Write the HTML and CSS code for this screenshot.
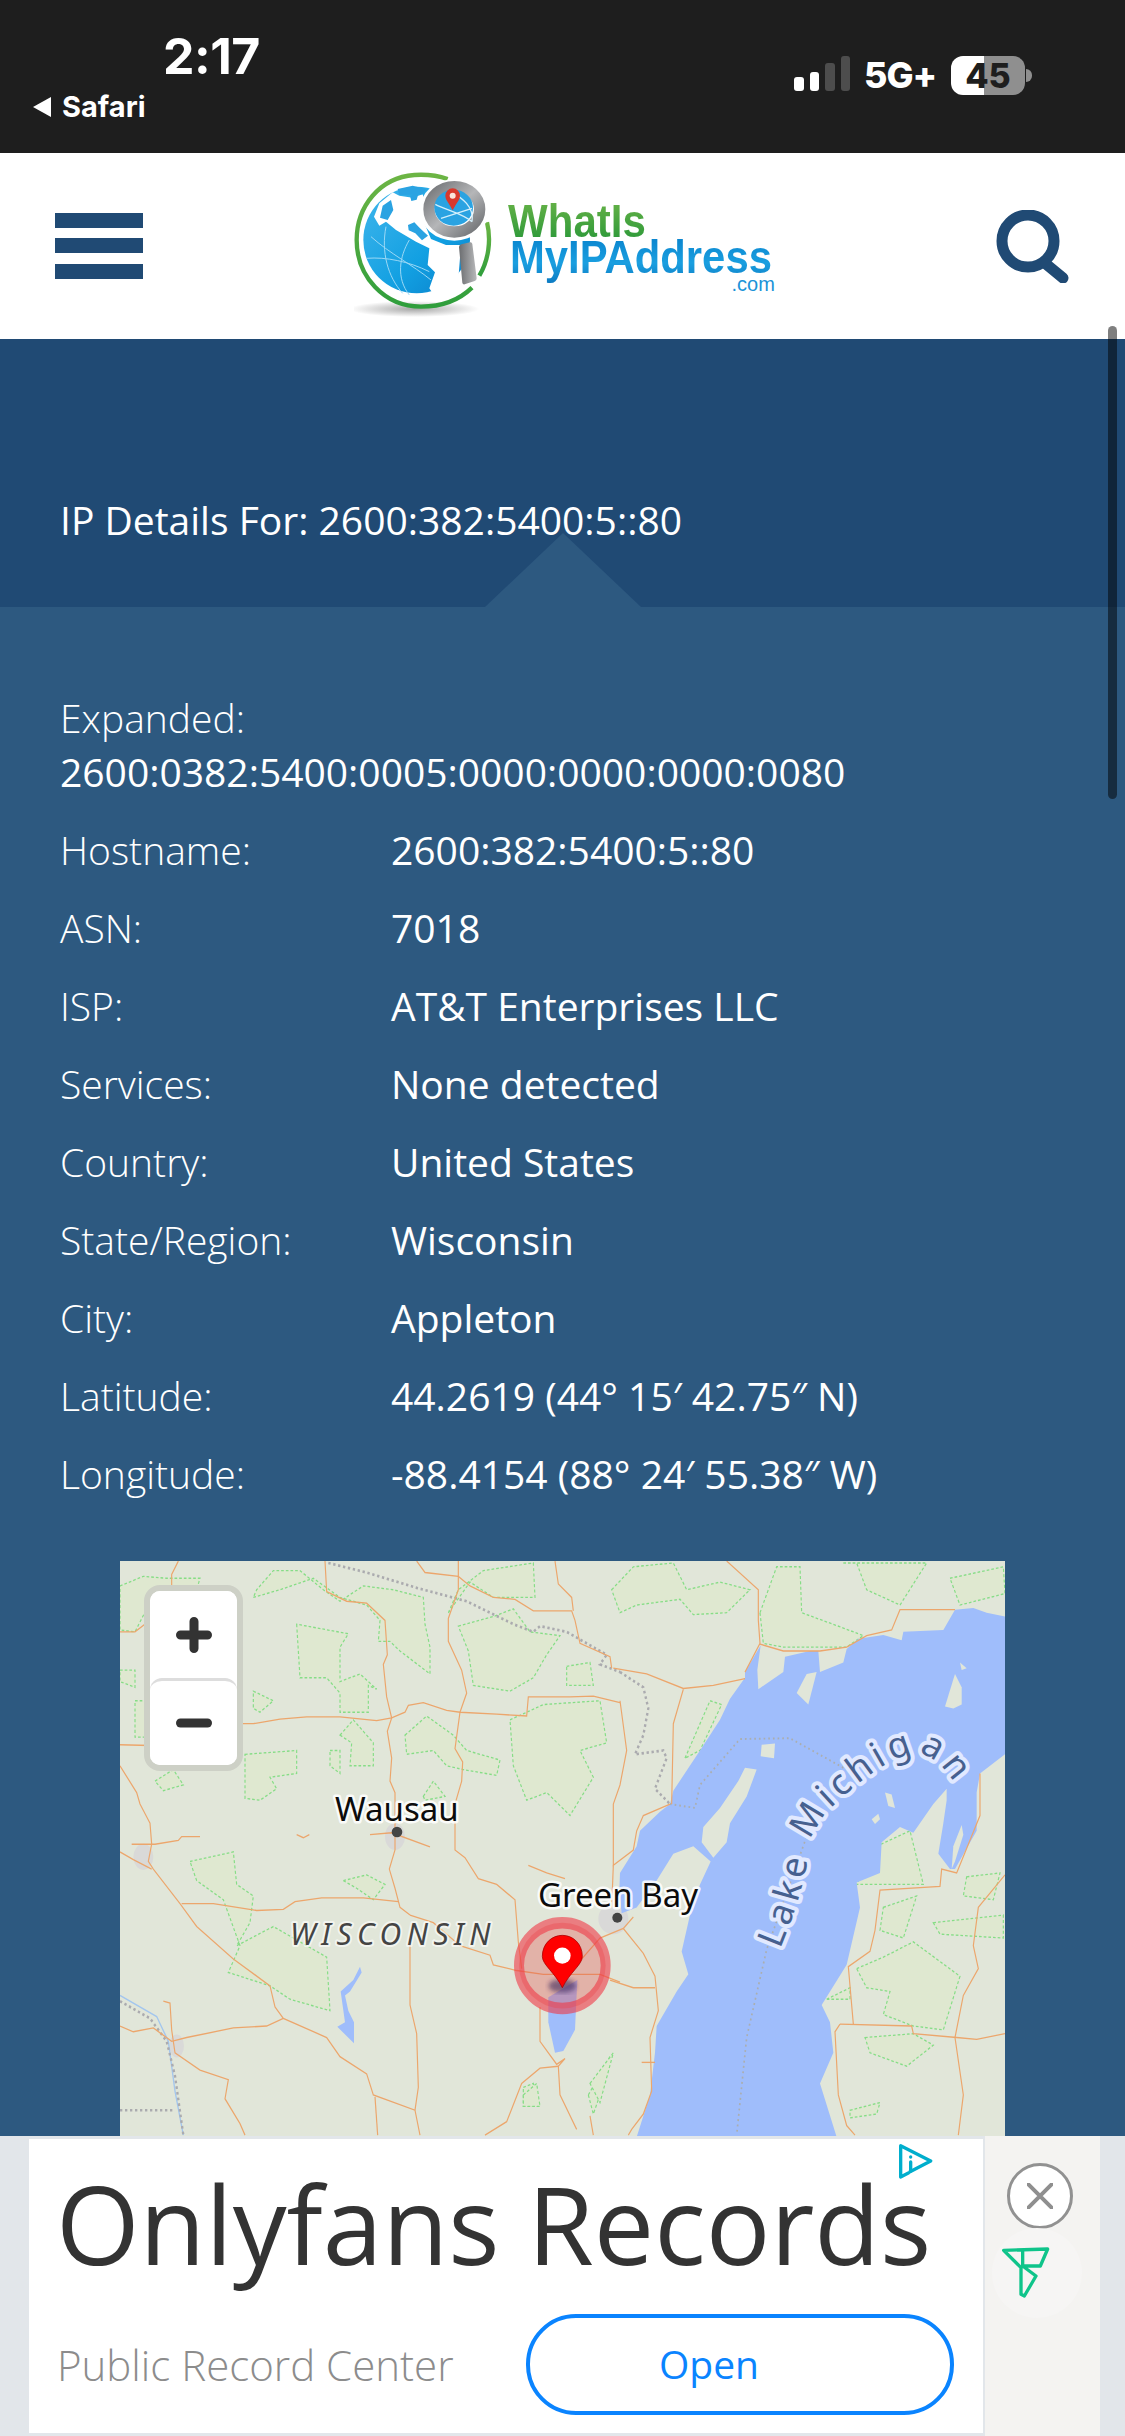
FILE: index.html
```html
<!DOCTYPE html>
<html lang="en">
<head>
<meta charset="utf-8">
<title>IP Details</title>
<link rel="stylesheet" href="styles.css">
</head>
<body>
<div class="status">
  <div class="status-left">
    <div class="time">2:17</div>
    <div class="back"><span class="back-arrow"></span><span>Safari</span></div>
  </div>
  <div class="status-right">
    <div class="signal"><i class="b1 on"></i><i class="b2 on"></i><i class="b3"></i><i class="b4"></i></div>
    <div class="net">5G+</div>
    <div class="battery">45</div>
    <div class="battery-cap"></div>
  </div>
</div>

<header class="site-header">
  <div class="burger"><i></i><i></i><i></i></div>
  <div class="logo">
    <svg class="logo-mark" viewBox="353 171 147 150" aria-label="WhatIsMyIPAddress globe">
      <defs>
        <linearGradient id="gGlobe" x1="0" y1="0" x2="1" y2="1"><stop offset="0" stop-color="#41b6ec"/><stop offset=".6" stop-color="#12a0e2"/><stop offset="1" stop-color="#0a7fc9"/></linearGradient>
        <linearGradient id="gRing" x1="0" y1="0" x2="1" y2="1"><stop offset="0" stop-color="#737578"/><stop offset=".5" stop-color="#b5b6b8"/><stop offset="1" stop-color="#6e7073"/></linearGradient>
        <linearGradient id="gHandle" x1="0" y1="0" x2="1" y2="0"><stop offset="0" stop-color="#6b6d70"/><stop offset="1" stop-color="#b8b9bb"/></linearGradient>
        <linearGradient id="gArc" x1="0" y1="0" x2="0" y2="1"><stop offset="0" stop-color="#6cb544"/><stop offset="1" stop-color="#2f9e3c"/></linearGradient>
        <radialGradient id="gShadow"><stop offset="0" stop-color="#8a8a8a" stop-opacity=".75"/><stop offset="1" stop-color="#8a8a8a" stop-opacity="0"/></radialGradient>
      </defs>
      <g transform="translate(345 165) scale(.33333)">
        <ellipse cx="205" cy="432" rx="195" ry="24" fill="url(#gShadow)"/>
        <path class="logo-ring" d="M305 42 C270 30 235 28 205 30 C100 38 32 125 32 225 C32 335 115 425 225 425 C290 425 340 405 378 368"/>
        <path class="logo-ring" d="M423 172 C436 225 428 285 400 332"/>
        <circle cx="212" cy="225" r="160" fill="url(#gGlobe)"/>
        <path class="logo-land" d="M100 115 L140 82 L160 92 L200 98 L230 88 L242 130 L235 175 L255 222 L300 240 L345 240 L338 330 L320 372 L262 388 L250 370 L267 322 L245 300 L250 250 L210 230 L150 195 L120 170 L100 182 L84 155Z"/>
        <path class="logo-sea" d="M110 122 L135 105 L142 135 L125 165 L102 158Z M192 92 L218 84 L212 104 L196 108Z M155 72 L200 62 L240 72 L230 88 L160 90Z M186 180 L205 172 L222 190 L246 212 L228 226 L208 205 L188 196Z"/>
        <path class="logo-grid" d="M75 215 C130 265 200 300 255 345 M120 185 C105 260 125 335 170 385 M190 225 C160 275 150 340 190 390 M62 280 C120 275 190 290 250 320"/>
        <ellipse cx="325" cy="135" rx="104" ry="92" fill="#fff"/>
        <ellipse cx="325" cy="133" rx="76" ry="68" fill="none" stroke="url(#gRing)" stroke-width="34"/>
        <ellipse cx="323" cy="128" rx="58" ry="54" fill="#2aa3e2"/>
        <path class="logo-grid-w" d="M268 118 C300 135 350 145 378 170 M310 76 C350 100 385 125 378 170 M285 160 L378 130"/>
        <path d="M320 136 C310 115 298 105 298 92 A22 22 0 0 1 342 92 C342 105 330 115 320 136Z" fill="#d8382c"/>
        <circle cx="320" cy="92" r="9" fill="#fbe3da"/>
        <path d="M346 238 L372 232 Q378 231 379 237 L392 340 Q392 346 386 348 L356 358 Q350 359 349 353 L339 246 Q339 240 346 238Z" fill="url(#gHandle)"/>
      </g>
    </svg>
    <div class="logo-text">
      <div class="logo-what">WhatIs</div>
      <div class="logo-my">MyIPAddress</div>
      <div class="logo-com">.com</div>
    </div>
  </div>
  <svg class="search" viewBox="0 0 73 73" aria-label="Search">
    <circle cx="32" cy="31" r="26" />
    <line x1="50" y1="54" x2="67" y2="68"/>
  </svg>
</header>

<section class="hero">
  <h1 class="hero-title">IP Details For: 2600:382:5400:5::80</h1>
</section>

<main class="details">
  <div class="expanded">
    <div class="label">Expanded:</div>
    <div class="value">2600:0382:5400:0005:0000:0000:0000:0080</div>
  </div>
  <div class="row"><div class="label">Hostname:</div><div class="value">2600:382:5400:5::80</div></div>
  <div class="row"><div class="label">ASN:</div><div class="value">7018</div></div>
  <div class="row"><div class="label">ISP:</div><div class="value">AT&amp;T Enterprises LLC</div></div>
  <div class="row"><div class="label">Services:</div><div class="value">None detected</div></div>
  <div class="row"><div class="label">Country:</div><div class="value">United States</div></div>
  <div class="row"><div class="label">State/Region:</div><div class="value">Wisconsin</div></div>
  <div class="row"><div class="label">City:</div><div class="value">Appleton</div></div>
  <div class="row"><div class="label">Latitude:</div><div class="value">44.2619 (44° 15′ 42.75″ N)</div></div>
  <div class="row"><div class="label">Longitude:</div><div class="value">-88.4154 (88° 24′ 55.38″ W)</div></div>

  <div class="map">
    <svg class="map-canvas" viewBox="0 0 885 578" aria-label="Map around Appleton, Wisconsin">
      <defs><filter id="blur6"><feGaussianBlur stdDeviation="7"/></filter></defs>
      <g transform="translate(-20 -21) scale(.33333 .3827)">
        <g class="forest">
          <path d="M60 120 L130 95 L200 100 L300 100 L290 130 L200 130 L140 180 L105 240 L60 235Z"/>
          <path d="M460 150 L540 130 L640 100 L720 150 L800 170 L840 210 L835 265 L870 265 L900 290 L990 350 L990 280 L975 220 L970 150 L880 130 L790 120 L720 160 L670 130 L600 80 L520 80 L470 130Z"/>
          <path d="M590 220 L600 360 L680 360 L720 400 L720 450 L805 450 L805 380 L830 390 L780 350 L720 370 L720 280 L745 245Z"/>
          <path d="M1045 190 L1075 130 L1150 80 L1300 60 L1305 150 L1240 150 L1180 150 L1110 110Z"/>
          <path d="M1075 225 L1180 200 L1240 180 L1290 240 L1380 250 L1340 300 L1300 360 L1230 395 L1120 380 L1105 290Z"/>
          <path d="M1230 470 L1330 430 L1500 420 L1520 530 L1440 550 L1480 620 L1410 720 L1340 660 L1280 680 L1240 590Z"/>
          <path d="M915 510 L980 460 L1060 510 L1100 550 L1200 575 L1190 615 L1090 600 L1040 590 L1000 550 L920 560Z"/>
          <path d="M435 560 L590 550 L590 610 L510 620 L530 650 L480 680 L435 675Z"/>
          <path d="M720 510 L760 470 L790 500 L820 530 L820 590 L750 590 L755 530Z"/>
          <path d="M690 550 L720 550 L720 610 L690 590Z"/>
          <path d="M270 840 L400 815 L410 900 L460 930 L450 1000 L410 1060 L520 1010 L680 1090 L690 1230 L570 1200 L510 1165 L385 1130 L420 1060 L370 940 L290 890Z"/>
          <path d="M730 890 L800 875 L855 900 L820 940 L770 910Z"/>
          <path d="M970 670 L1000 630 L1035 670 L975 680Z"/>
          <path d="M165 630 L220 600 L250 640 L190 655Z"/>
          <path d="M105 420 L150 420 L150 515 L105 515Z"/>
          <path d="M60 340 L105 340 L105 385 L60 370Z"/>
          <path d="M460 395 L520 420 L480 450 L460 440Z"/>
          <path d="M1465 1450 L1530 1350 L1520 1400 L1480 1500Z"/>
          <path d="M1270 1430 L1300 1420 L1320 1480 L1270 1480Z"/>
          <path d="M1400 330 L1470 320 L1480 380 L1400 380Z"/>
        </g>
        <g class="urban">
          <ellipse cx="130" cy="828" rx="30" ry="34"/>
          <ellipse cx="885" cy="775" rx="30" ry="35"/>
          <ellipse cx="230" cy="1322" rx="22" ry="30"/>
        </g>
        <path class="lake" d="M780 1115 L785 1130 L750 1180 L735 1190 L745 1230 L762 1260 L762 1315 L712 1272 L735 1260 L722 1180 L760 1150Z"/>
        <path class="river" d="M60 1190 L170 1245 L205 1310 L225 1440 L250 1555"/>
        <path class="border" d="M60 1205 L150 1250 L200 1310 L225 1400 L250 1555"/>
        <path class="border" d="M60 1490 L225 1490"/>
        <path class="border" d="M685 60 L800 85 L950 125 L1100 160 L1240 220 L1300 240 L1320 225 L1400 240 L1520 300 L1500 325 L1560 345"/>
        <g class="roads">
          <path d="M60 240 L105 240 L150 210 L215 130 L215 90 L235 55"/>
          <path d="M410 480 L460 480 L540 468 L620 462 L720 462 L830 472 L875 465 L915 450 L925 432 L970 425 L1040 445 L1080 450 L1190 455 L1280 460 L1285 410 L1410 410 L1480 408 L1560 425"/>
          <path d="M675 55 L680 135 L740 160 L800 165 L855 210 L862 300 L850 325 L860 410 L875 465 L862 500 L875 570 L870 630 L885 660 L885 810 L868 860 L885 910 L900 960 L930 980"/>
          <path d="M950 55 L975 85 L1075 95 L1110 120 L1180 150 L1245 155 L1300 185 L1415 185 L1425 210 L1440 270 L1530 305 L1535 335"/>
          <path d="M1075 55 L1075 130 L1045 205 L1045 265 L1085 340 L1100 400 L1080 450 L1065 545 L1088 580 L1085 630 L1065 690 L1065 810 L1095 830 L1135 885 L1190 900 L1245 940 L1255 1050 L1265 1120"/>
          <path d="M60 590 L110 660 L120 690 L150 740 L155 795 L145 840 L160 860 L240 950 L290 1010 L400 1095 L510 1165 L525 1220 L550 1250 L680 1300 L720 1350 L800 1395 L820 1450 L945 1490 L960 1555"/>
          <path d="M95 795 L165 795 L235 785 L245 775 L300 775"/>
          <path d="M60 815 L100 835 L155 860"/>
          <path d="M245 950 L340 950 L470 968 L550 965 L585 945 L665 935 L790 935 L895 945"/>
          <path d="M930 1050 L930 1215 L950 1290 L955 1430 L945 1490"/>
          <path d="M930 980 L1000 1000 L1080 1060 L1170 1085 L1180 1110 L1250 1125 L1330 1135 L1500 1135 L1560 1155"/>
          <path d="M60 1270 L100 1285 L160 1275 L215 1310 L260 1300 L400 1275 L500 1270 L550 1250"/>
          <path d="M190 1205 L210 1210 L215 1280 L225 1340 L300 1385 L385 1410 L375 1460 L420 1525 L435 1555"/>
          <path d="M1320 1220 L1320 1310 L1370 1370 L1395 1355 L1375 1375 L1380 1450 L1430 1540"/>
          <path d="M1155 1555 L1220 1520 L1265 1420 L1320 1380 L1375 1375"/>
          <path d="M810 770 L875 765 L990 802"/>
          <path d="M1285 850 L1340 870 L1395 885"/>
          <path d="M825 1455 L833 1555"/>
          <path d="M60 535 L150 537"/>
          <path d="M590 770 L610 778 L628 770"/>
          <path d="M1365 55 L1375 115 L1415 150 L1420 185"/>
        </g>
      </g>
      <g transform="translate(380 -21) scale(.33333 .3827)">
        <g class="forest">
          <path d="M335 130 L400 70 L520 60 L560 130 L660 110 L750 130 L680 190 L580 195 L540 155 L410 170 L360 190Z"/>
          <path d="M780 190 L830 70 L900 70 L905 190 L1030 230 L1090 250 L1040 280 L850 280 L790 270Z"/>
          <path d="M1030 60 L1280 60 L1200 170 L1100 130 L1070 60Z"/>
          <path d="M1350 100 L1510 70 L1515 140 L1380 170Z"/>
          <path d="M555 570 L630 420 L665 430 L600 550Z"/>
          <path d="M1070 1120 L1150 1090 L1240 1050 L1380 1140 L1330 1280 L1240 1270 L1150 1240 L1170 1180 L1100 1170Z"/>
          <path d="M1095 1300 L1240 1290 L1300 1320 L1220 1375 L1110 1340Z"/>
          <path d="M1150 960 L1250 930 L1210 1040 L1140 1020Z"/>
          <path d="M1130 800 L1230 760 L1270 900 L1070 900Z"/>
          <path d="M1300 1000 L1510 980 L1510 1040 L1320 1030Z"/>
          <path d="M1400 880 L1500 870 L1480 940 L1390 930Z"/>
          <path d="M1050 1490 L1140 1470 L1130 1500 L1050 1510Z"/>
          <path d="M980 1200 L1050 1170 L1050 1200Z"/>
          <path d="M270 1420 L340 1340 L300 1470Z"/>
          <path d="M70 1450 L110 1420 L120 1480 L70 1480Z"/>
        </g>
        <ellipse class="urban" cx="340" cy="990" rx="45" ry="40"/>
        <path class="lake" d="M1515 200 L1460 190 L1420 178 L1365 182 L1330 235 L1210 240 L1205 262 L1150 248 L1075 258 L1040 285 L1030 320 L960 345 L955 290 L930 290 L855 305 L850 345 L775 390 L772 340 L782 275 L735 345 L735 360 L690 415 L660 470 L600 550 L520 655 L510 690 L480 710 L420 760 L410 800 L360 870 L358 915 L365 975 L410 960 L470 890 L520 820 L580 800 L632 840 L600 900 L575 960 L545 1075 L565 1135 L530 1180 L470 1270 L465 1340 L450 1450 L410 1560 L1010 1560 L960 1420 L1000 1340 L990 1260 L965 1215 L1040 1110 L1080 960 L1070 895 L1140 870 L1145 790 L1200 750 L1240 765 L1300 690 L1340 650 L1340 680 L1330 740 L1315 820 L1350 860 L1365 860 L1430 760 L1430 660 L1440 610 L1515 560Z"/>
        <g class="land">
          <path d="M770 600 L735 595 L715 630 L660 700 L610 750 L605 790 L640 830 L680 790 L690 740 L740 670Z"/>
          <path d="M890 400 L920 350 L950 345 L925 430Z"/>
          <path d="M785 535 L825 532 L822 570 L782 565Z"/>
          <path d="M1155 660 L1175 665 L1185 700 L1165 695Z"/>
          <path d="M1115 730 L1135 715 L1140 730 L1125 742Z"/>
          <path d="M1380 320 L1400 335 L1385 340Z"/>
          <path d="M1335 435 L1365 350 L1385 385 L1385 430 L1360 440Z"/>
          <path d="M1355 860 L1360 800 L1385 745 L1390 770 L1365 840Z"/>
        </g>
        <path class="lake" d="M145 1195 L232 1150 L225 1280 L190 1335 L165 1340 L145 1260Z"/>
        <path class="border" d="M360 345 L430 385 L445 440 L430 510 L405 560 L490 550 L500 570 L465 650 L510 690"/>
        <path class="border-fine" d="M510 690 L585 700 L600 640 L720 520 L870 518 L1040 600"/>
        <path class="border-fine" d="M930 750 L800 1070 L740 1300 L710 1555"/>
        <g class="roads">
          <path d="M680 55 L775 130 L775 210 L780 270 L735 345"/>
          <path d="M780 272 L850 290 L960 290 L1040 280 L1100 250 L1175 235 L1200 182 L1365 182"/>
          <path d="M340 335 L440 350 L550 388 L640 380 L735 362"/>
          <path d="M550 390 L520 480 L515 690"/>
          <path d="M360 420 L380 550 L360 640 L340 690 L340 850 L400 810 L410 760 L430 720 L510 690"/>
          <path d="M340 850 L335 960"/>
          <path d="M370 1015 L430 1080 L465 1140 L475 1230 L450 1300 L455 1440 L430 1500 L395 1540 L385 1555"/>
          <path d="M330 1150 L400 1170 L465 1170"/>
          <path d="M270 1505 L280 1555"/>
          <path d="M425 1365 L465 1365"/>
          <path d="M1440 610 L1440 720 L1370 870 L1325 860 L1320 905 L1140 915 L1125 1020 L1110 1075 L1045 1115 L1060 1265"/>
          <path d="M1020 1265 L1235 1270 L1240 1290 L1370 1300 L1430 1305 L1515 1290"/>
          <path d="M1020 1265 L1005 1285 L1015 1450 L1040 1530 L1065 1555"/>
          <path d="M1515 875 L1435 960 L1420 1060 L1435 1120 L1390 1190 L1365 1300 L1390 1450 L1375 1555"/>
          <path d="M245 1095 L300 1040 L370 1015 L400 985"/>
        </g>
        <g>
          <ellipse class="geo-fill" cx="187" cy="1112" rx="130" ry="112"/>
          <ellipse class="pin-shadow" cx="187" cy="1165" rx="42" ry="18" filter="url(#blur6)"/>
          <path class="pin" d="M187 1170 C165 1130 127 1110 127 1088 C127 1055 155 1033 187 1033 C219 1033 247 1055 247 1088 C247 1110 209 1130 187 1170Z"/>
          <ellipse cx="187" cy="1086" rx="25" ry="21" fill="#fff"/>
        </g>
        <ellipse class="dot" cx="352" cy="987" rx="15" ry="13"/>
      </g>
      <circle class="dot" cx="277" cy="271" r="5.300"/>
      <path id="lakeCurve" class="curve" d="M660 388 C672 360 684 325 688 297 C690 280 695 262 715 243 C740 220 765 200 790 193 C810 190 825 205 845 238"/>
      <text class="label-water"><textPath href="#lakeCurve">Lake Michigan</textPath></text>
      <text class="label-city" x="215" y="260">Wausau</text>
      <text class="label-city" x="418" y="346">Green Bay</text>
      <text class="label-state" x="170" y="384">WISCONSIN</text>
    </svg>
    <div class="zoom">
      <div class="zoom-btn"><svg viewBox="0 0 36 36"><path d="M4.500 18H31.500M18 4.500V31.500"/></svg></div>
      <div class="zoom-btn zoom-minus"><svg viewBox="0 0 36 36"><path d="M4.500 18H31.500"/></svg></div>
    </div>
  </div>
</main>

<div class="scrollbar"></div>

<aside class="ad">
  <div class="ad-card">
    <svg class="adchoice" viewBox="115 70 103 108"><path d="M122 172 L122 78 L212 124 L150 156 M122 172 L145 160"/><circle cx="152" cy="112" r="5"/><path d="M152 127V154"/></svg>
    <div class="ad-title">Onlyfans Records</div>
    <div class="ad-bottom">
      <div class="ad-source">Public Record Center</div>
      <div class="ad-open">Open</div>
    </div>
  </div>
  <div class="ad-side">
    <div class="ad-close"><svg viewBox="0 0 26 26"><path d="M1 1L25 25M25 1L1 25"/></svg></div>
    <div class="ad-brand"><svg viewBox="420 375 150 156"><path d="M428 388 L560 384 L538 435 L485 435 L525 465 L490 525 L480 520 L480 440Z M485 388 V435"/></svg></div>
  </div>
</aside>
</body>
</html>
```
FILE: styles.css
```css
* { box-sizing: border-box; }
html, body { margin: 0; padding: 0; }
body {
  width: 1125px;
  height: 2436px;
  overflow: hidden;
  background: #2d5980;
  font-family: "Open Sans", sans-serif;
  color: #fff;
}

/* status bar */
.status {
  height: 153px;
  background: #1e1e1e;
  display: flex;
  justify-content: space-between;
  padding: 0 93px 0 33px;
}
.status-left { display: flex; flex-direction: column; }
.time {
  margin: 29px 0 0 130px;
  font: 700 50px/54px "Inter", sans-serif;
  letter-spacing: -.5px;
}
.back {
  margin-top: 7px;
  display: flex;
  align-items: center;
  gap: 11px;
  font: 700 29px/34px "Inter", sans-serif;
}
.back-arrow {
  width: 0; height: 0;
  border-style: solid;
  border-width: 10px 18px 10px 0;
  border-color: transparent #fff transparent transparent;
}
.status-right { display: flex; align-items: flex-start; padding-top: 56px; }
.signal { display: flex; align-items: flex-end; gap: 6px; height: 37px; padding-bottom: 2px; }
.signal i { width: 9.500px; border-radius: 3px; background: #4d4d4d; display: block; }
.signal .on { background: #fff; }
.b1 { height: 14px; } .b2 { height: 19px; } .b3 { height: 28px; } .b4 { height: 35px; }
.net { margin-left: 14px; width: 87px; font: 800 36px/38px "Inter", sans-serif; letter-spacing: -1px; }
.battery {
  width: 74px; height: 39px;
  border-radius: 12px;
  background: linear-gradient(90deg, #fff 0 33px, #8f8f8f 33px);
  color: #1e1e1e;
  font: 800 34px/39px "Inter", sans-serif;
  text-align: center;
}
.battery-cap { width: 6px; height: 13px; margin: 13px 0 0 1px; background: #8f8f8f; border-radius: 0 7px 7px 0; }

/* header */
.site-header {
  height: 186px;
  background: #fff;
  display: flex;
  align-items: center;
  justify-content: space-between;
  padding: 0 56px 0 55px;
}
.burger { width: 88px; display: flex; flex-direction: column; gap: 10.500px; margin-top: -1px; }
.burger i { display: block; height: 15px; background: #204a74; }
.logo { width: 432px; height: 150px; flex: none; display: flex; }
.logo-mark { width: 147px; height: 150px; flex: none; }
.logo-text { width: 285px; padding-top: 32px; font-family: "Liberation Sans", sans-serif; white-space: nowrap; }
.logo-ring { fill: none; stroke: url(#gArc); stroke-width: 13; }
.logo-land { fill: #fff; }
.logo-sea { fill: #2aa3e2; }
.logo-grid { fill: none; stroke: #9bd8f5; stroke-width: 3; }
.logo-grid-w { fill: none; stroke: #d4effb; stroke-width: 4; }
.logo-what, .logo-my {
  width: max-content;
  font-size: 47px;
  font-weight: 700;
  line-height: 36px;
  transform-origin: left center;
  background-clip: text;
  -webkit-background-clip: text;
  color: transparent;
}
.logo-what {
  margin-left: 7px;
  transform: scaleX(.895);
  background-image: linear-gradient(#62b046, #2f9a3a);
}
.logo-my {
  margin: 0 0 -12px 9px;
  padding-bottom: 12px;
  transform: scaleX(.89);
  background-image: linear-gradient(#0b86cf, #1a9fe0 50%, #0a74bd);
}
.logo-com {
  margin: 1px 0 0 231px;
  font-size: 20px;
  line-height: 17px;
  color: #1a93d8;
}
.search { width: 73px; height: 73px; flex: none; }
.search circle, .search line { fill: none; stroke: #204a74; stroke-width: 11; stroke-linecap: round; }

/* hero */
.hero {
  position: relative;
  height: 268px;
  background: #204a74;
  padding: 154px 60px 0;
}
.hero::after {
  content: "";
  position: absolute;
  left: 485px;
  bottom: 0;
  border-style: solid;
  border-width: 0 78px 74px;
  border-color: transparent transparent #2d5980;
}
.hero-title { position: relative; z-index: 1; margin: 0; font-size: 39px; line-height: 54px; font-weight: 400; }

/* details */
.details { padding: 84px 60px 0; font-size: 39px; line-height: 54px; }
.label { font-weight: 300; }
.value { font-weight: 400; }
.expanded { margin-bottom: 24px; }
.row { display: flex; margin-bottom: 24px; }
.row .label { width: 331px; flex: none; }

/* map */
.map {
  position: relative;
  width: 885px;
  height: 575px;
  margin: 60px 0 0 60px;
  background: #e1e6d9;
  overflow: hidden;
}
.map-canvas { display: block; width: 885px; height: 578px; }
.forest path { fill: #dfe8d0; stroke: #86dd86; stroke-width: 3.500; stroke-dasharray: 8 6; }
.urban, .urban ellipse { fill: #d9d9d8; }
.lake { fill: #9fbdfb; }
.land path { fill: #e1e6d9; }
.river { fill: none; stroke: #a3c6ee; stroke-width: 4; }
.border { fill: none; stroke: #ababaf; stroke-width: 7; stroke-dasharray: 7 8; }
.border-fine { fill: none; stroke: #aaaeb0; stroke-width: 5; stroke-dasharray: 5 9; }
.roads path { fill: none; stroke: #eca66c; stroke-width: 3.500; }
.geo-fill { fill: rgba(228, 80, 72, .34); stroke: rgba(240, 56, 70, .6); stroke-width: 30; }
.pin-shadow { fill: rgba(60, 40, 90, .6); }
.pin { fill: #f00; stroke: #a30000; stroke-width: 2; }
.dot { fill: #444; }
.curve { fill: none; }
.label-city, .label-state, .label-water {
  font-family: "Noto Sans", sans-serif;
  paint-order: stroke;
  stroke-linejoin: round;
}
.label-city { font-size: 33px; fill: #0c0c0c; stroke: rgba(255, 255, 255, .85); stroke-width: 5px; }
.label-state { font-size: 30px; font-style: italic; letter-spacing: 5.500px; fill: #444; stroke: rgba(255, 255, 255, .6); stroke-width: 4px; }
.label-water { font-size: 36px; letter-spacing: 5px; fill: #46608f; stroke: #e1e9ff; stroke-width: 8px; }

.zoom {
  position: absolute;
  left: 24px;
  top: 24px;
  width: 99px;
  border: 6px solid #cdd0c6;
  border-radius: 16px;
  background: #fff;
}
.zoom-btn {
  height: 87px;
  background: #fff;
  border-radius: 10px 10px 0 0;
  display: flex;
  align-items: center;
  justify-content: center;
}
.zoom-minus { height: 87px; border-top: 3px solid #ddd; border-radius: 12px 12px 10px 10px; }
.zoom-btn svg { width: 36px; height: 36px; }
.zoom-btn path { fill: none; stroke: #333; stroke-width: 9; stroke-linecap: round; }

/* overlay scrollbar */
.scrollbar {
  position: fixed;
  left: 1108px;
  top: 326px;
  width: 9px;
  height: 473px;
  border-radius: 5px;
  background: rgba(0, 0, 0, .5);
}

/* ad */
.ad {
  position: fixed;
  left: 0;
  bottom: 0;
  width: 1125px;
  height: 300px;
  background: #e2e6ea;
  display: flex;
  padding-left: 29px;
  padding-right: 25px;
}
.ad-card {
  position: relative;
  width: 954px;
  height: 294px;
  margin-top: 3px;
  background: #fff;
  padding: 0 29px 0 27px;
}
.adchoice { position: absolute; left: 869px; top: 4px; width: 35px; height: 36px; }
.adchoice path { fill: none; stroke: #00aecd; stroke-width: 10; stroke-linecap: round; stroke-linejoin: round; }
.adchoice circle { fill: #00aecd; }
.ad-title { margin-top: 13px; font-size: 107.500px; line-height: 142px; color: #333; white-space: nowrap; }
.ad-bottom { display: flex; justify-content: space-between; align-items: center; margin-top: 20px; padding-left: 1px; }
.ad-source { font-size: 42px; font-weight: 300; color: #8c8c8c; }
.ad-open {
  width: 428px;
  height: 101px;
  border: 4px solid #0a84ff;
  border-radius: 50px;
  color: #0a84ff;
  font-size: 39px;
  line-height: 91px;
  text-align: center;
  padding-right: 62px;
}
.ad-side {
  width: 115px;
  margin-left: 2px;
  background: #f4f3f1;
  position: relative;
  padding-top: 27px;
  display: flex;
  flex-direction: column;
}
.ad-close {
  width: 66px; height: 66px;
  margin-left: 22px;
  border: 3px solid #919191;
  border-radius: 50%;
  background: #fff;
  display: flex; align-items: center; justify-content: center;
}
.ad-close svg { width: 26px; height: 26px; }
.ad-close path { fill: none; stroke: #8f8f8f; stroke-width: 4; stroke-linecap: round; }
.ad-brand {
  width: 90px; height: 90px;
  margin: -1px 0 0 7px;
  border-radius: 50%;
  background: #f6f5f4;
  padding: 18px 33px 22px 9px;
}
.ad-brand svg { display: block; width: 50px; height: 52px; }
.ad-brand path { fill: none; stroke: #0fc48a; stroke-width: 10; stroke-linejoin: round; }
```
